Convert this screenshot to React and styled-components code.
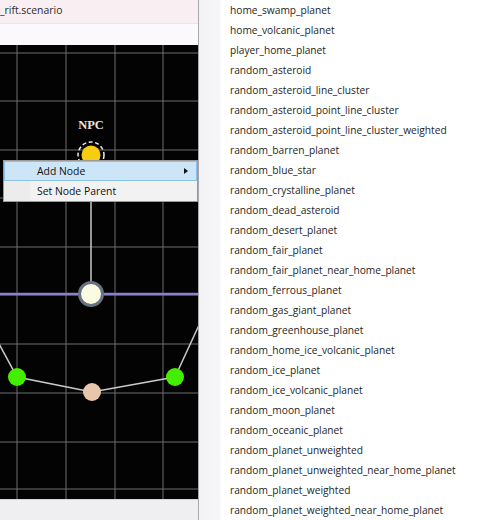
import React from 'react'
import styled, { createGlobalStyle } from 'styled-components'

const GlobalStyle = createGlobalStyle`
  html, body {
    margin: 0;
    padding: 0;
    background: #ffffff;
  }
  body {
    font-family: "Open Sans", "Liberation Sans", sans-serif;
  }
`

const Screen = styled.div`
  width: 485px;
  height: 520px;
  display: flex;
  overflow: hidden;
`

const EditorPane = styled.div`
  width: 198px;
  flex: none;
  display: flex;
  flex-direction: column;
  border-right: 1px solid #a8a8ac;
`

const TitleBar = styled.div`
  height: 24px;
  flex: none;
  background: #f9eff3;
  border-bottom: 1px solid #ece6ea;
  font-size: 10.4px;
  color: #2a2a2a;
  line-height: 21px;
  box-sizing: border-box;
  white-space: nowrap;
`

const ToolStrip = styled.div`
  height: 21px;
  flex: none;
  background: #fbf9fb;
`

const Canvas = styled.div`
  position: relative;
  flex: 1;
  background: #030303;
  overflow: hidden;
`

const StatusBar = styled.div`
  height: 20px;
  flex: none;
  background: #efeff1;
  border-top: 1px solid #d6d6d8;
`

const NodeLabel = styled.div`
  position: absolute;
  left: 71px;
  top: 73px;
  width: 40px;
  text-align: center;
  font-family: "Liberation Serif", serif;
  font-weight: bold;
  font-size: 12.5px;
  color: #e6e6e6;
`

const Menu = styled.div`
  position: absolute;
  left: 3px;
  top: 115px;
  width: 195px;
  box-sizing: border-box;
  background: linear-gradient(to right, #ececec 0, #ececec 26px, #f2f2f2 27px);
  border: 1px solid #9a9a9a;
  font-family: "Open Sans", "Liberation Sans", sans-serif;
  font-size: 10.4px;
  color: #111;
`

const MenuItem = styled.div`
  position: relative;
  height: 20px;
  line-height: 18px;
  box-sizing: border-box;
  padding-left: 32px;
  background: ${p => (p.$active ? '#cde6f7' : 'transparent')};
  border: 1px solid ${p => (p.$active ? '#8cc2ea' : 'transparent')};
`

const SubArrow = styled.span`
  position: absolute;
  right: 8px;
  top: 6px;
  width: 0;
  height: 0;
  border-top: 3.5px solid transparent;
  border-bottom: 3.5px solid transparent;
  border-left: 4px solid #111;
`

const ListPane = styled.div`
  flex: 1;
  background: linear-gradient(to right, #f3f3f5 0, #f6f6f8 21px, #ffffff 22px);
  padding: 1px 0 0 31px;
`

const ListItem = styled.div`
  height: 20px;
  line-height: 18px;
  font-size: 10.2px;
  color: #1e1e1e;
  white-space: nowrap;
`

const items = [
  'home_swamp_planet',
  'home_volcanic_planet',
  'player_home_planet',
  'random_asteroid',
  'random_asteroid_line_cluster',
  'random_asteroid_point_line_cluster',
  'random_asteroid_point_line_cluster_weighted',
  'random_barren_planet',
  'random_blue_star',
  'random_crystalline_planet',
  'random_dead_asteroid',
  'random_desert_planet',
  'random_fair_planet',
  'random_fair_planet_near_home_planet',
  'random_ferrous_planet',
  'random_gas_giant_planet',
  'random_greenhouse_planet',
  'random_home_ice_volcanic_planet',
  'random_ice_planet',
  'random_ice_volcanic_planet',
  'random_moon_planet',
  'random_oceanic_planet',
  'random_planet_unweighted',
  'random_planet_unweighted_near_home_planet',
  'random_planet_weighted',
  'random_planet_weighted_near_home_planet',
]

// canvas origin is y=45 in page coords
const vLines = [17, 66, 115, 163]
const hLines = [8, 56, 105, 153, 202, 250, 299, 348, 397, 444]

function ScenarioGraph() {
  return (
    <svg width="198" height="455" viewBox="0 0 198 455" style={{ display: 'block' }}>
      {vLines.map(x => (
        <line key={'v' + x} x1={x} y1="0" x2={x} y2="455" stroke="#6e6e6e" strokeWidth="1" />
      ))}
      {hLines.map(y => (
        <line key={'h' + y} x1="0" y1={y} x2="198" y2={y} stroke="#6e6e6e" strokeWidth="1" />
      ))}
      <line x1="0" y1="249" x2="198" y2="249" stroke="#8d7fd0" strokeWidth="2.5" />
      <line x1="91" y1="110" x2="91" y2="248" stroke="#c8c8c8" strokeWidth="1.5" />
      <polyline
        points="-2,297 17,332 92,347 175,332 199,280"
        fill="none"
        stroke="#c8c8c8"
        strokeWidth="1.5"
      />
      <circle cx="91" cy="110" r="13" fill="none" stroke="#eeeeee" strokeWidth="1.5" strokeDasharray="4 2.5" />
      <circle cx="91" cy="110" r="9.5" fill="#f8cc10" />
      <circle cx="91" cy="249" r="11.5" fill="#fbfbe2" stroke="#66727f" strokeWidth="3" />
      <circle cx="17" cy="332" r="9" fill="#44ee00" />
      <circle cx="175" cy="332" r="9" fill="#44ee00" />
      <circle cx="92" cy="347" r="9" fill="#e8c6ac" />
    </svg>
  )
}

export default function App() {
  return (
    <Screen>
      <GlobalStyle />
      <EditorPane>
        <TitleBar>_rift.scenario</TitleBar>
        <ToolStrip />
        <Canvas>
          <ScenarioGraph />
          <NodeLabel>NPC</NodeLabel>
          <Menu>
            <MenuItem $active>
              Add Node
              <SubArrow />
            </MenuItem>
            <MenuItem>Set Node Parent</MenuItem>
          </Menu>
        </Canvas>
        <StatusBar />
      </EditorPane>
      <ListPane>
        {items.map(name => (
          <ListItem key={name}>{name}</ListItem>
        ))}
      </ListPane>
    </Screen>
  )
}
